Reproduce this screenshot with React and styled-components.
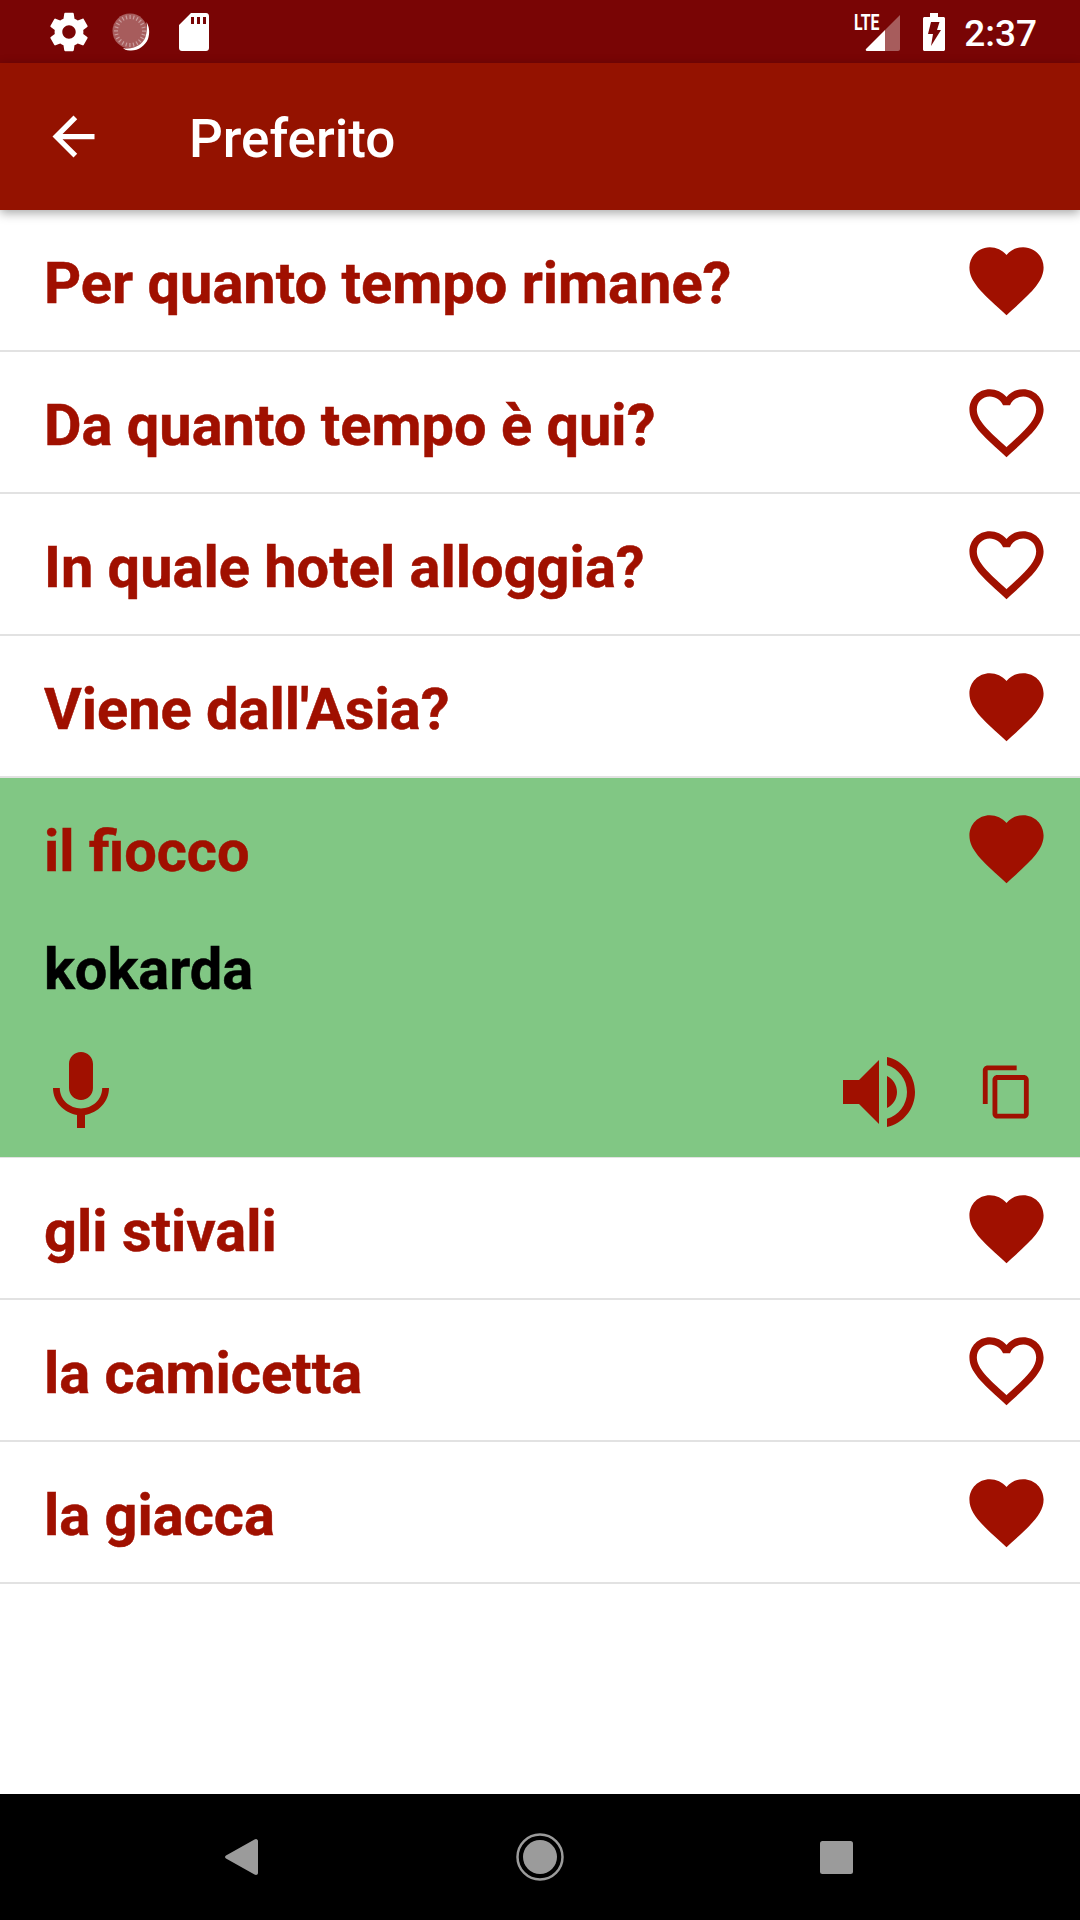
import React from "react";
import styled, { createGlobalStyle } from "styled-components";

const GlobalStyle = createGlobalStyle`
  html, body {
    margin: 0;
    padding: 0;
    background: #fff;
  }
  * {
    box-sizing: border-box;
  }
`;

const RED = "#a01000";

const Page = styled.div`
  width: 1080px;
  height: 1920px;
  display: flex;
  flex-direction: column;
  font-family: Roboto, "Liberation Sans", sans-serif;
  background: #fff;
  overflow: hidden;
`;

const StatusBar = styled.div`
  height: 63px;
  flex: none;
  background: #790505;
  display: flex;
  align-items: center;
  padding: 0 43px 0 46px;
  color: #fff;
`;

const StatusLeft = styled.div`
  display: flex;
  align-items: center;
  flex: 1;
`;

const DialWrap = styled.div`
  margin: 0 29px 0 20px;
  display: flex;
`;

const SignalBox = styled.div`
  position: relative;
  width: 47px;
  height: 38px;
  margin-right: 23px;
`;

const LteLabel = styled.span`
  position: absolute;
  left: 1px;
  top: 0;
  font-size: 22px;
  line-height: 20px;
  font-weight: 700;
  color: #fff;
  transform: scaleX(0.72);
  transform-origin: left top;
`;

const Clock = styled.span`
  font-size: 37px;
  font-weight: 500;
  line-height: 63px;
  margin-left: 19px;
  padding-top: 3px;
`;

const Toolbar = styled.header`
  height: 147px;
  flex: none;
  background: #941200;
  display: flex;
  align-items: center;
  color: #fff;
  padding-left: 42px;
  position: relative;
  z-index: 2;
  box-shadow: 0 3px 10px rgba(0, 0, 0, 0.35);
`;

const ToolbarTitle = styled.h1`
  margin: 0 0 0 84px;
  font-size: 53px;
  font-weight: 500;
  line-height: 60px;
  padding-top: 4px;
`;

const List = styled.main`
  flex: 1;
  display: flex;
  flex-direction: column;
`;

const Row = styled.div`
  height: 142px;
  flex: none;
  display: flex;
  align-items: center;
  justify-content: space-between;
  padding: 0 29px 0 44px;
  border-bottom: 2px solid ${(p) => (p.$open ? "transparent" : "#e2e2e2")};
`;

const OpenItem = styled.div`
  background: #81c784;
  display: flex;
  flex-direction: column;
  height: 380px;
  flex: none;
  border-bottom: 1px solid #e2e2e2;
`;

const Phrase = styled.span`
  font-size: 57.75px;
  font-weight: 700;
  color: ${RED};
  line-height: 70px;
  padding-top: 5px;
  -webkit-text-stroke: 0.5px ${RED};
`;

const Translation = styled.div`
  height: 106px;
  padding: 14px 44px 0;
  font-size: 57.75px;
  font-weight: 700;
  line-height: 70px;
  color: #000;
  -webkit-text-stroke: 0.5px #000;
`;

const Actions = styled.div`
  flex: 1;
  display: flex;
  align-items: center;
  padding: 0 44px 0 33px;
`;

const Spacer = styled.div`
  flex: 1;
`;

const CopyWrap = styled.div`
  margin-left: 51px;
  display: flex;
`;

const Icon = styled.svg`
  display: block;
  flex: none;
  fill: ${(p) => p.$color || RED};
`;

const SignalIcon = styled(Icon)`
  position: absolute;
  right: 0;
  bottom: 0;
`;

const NavBar = styled.nav`
  height: 126px;
  flex: none;
  background: #000;
  display: flex;
  align-items: center;
  justify-content: center;
`;

const NavSlot = styled.div`
  width: 296px;
  display: flex;
  justify-content: center;
`;

const BackSlot = styled(NavSlot)`
  padding-right: 6px;
`;

const HEART_FILLED =
  "M12 21.35l-1.45-1.32C5.4 15.36 2 12.28 2 8.5 2 5.42 4.42 3 7.5 3c1.74 0 3.41.81 4.5 2.09C13.09 3.81 14.76 3 16.5 3 19.58 3 22 5.42 22 8.5c0 3.78-3.4 6.86-8.55 11.54L12 21.35z";
const HEART_OUTLINE =
  "M16.5 3c-1.74 0-3.41.81-4.5 2.09C10.91 3.81 9.24 3 7.5 3 4.42 3 2 5.42 2 8.5c0 3.78 3.4 6.86 8.55 11.54L12 21.35l1.45-1.32C18.6 15.36 22 12.28 22 8.5 22 5.42 19.58 3 16.5 3zm-4.4 15.55l-.1.1-.1-.1C7.14 14.24 4 11.39 4 8.5 4 6.5 5.5 5 7.5 5c1.54 0 3.04.99 3.57 2.36h1.87C13.46 5.99 14.96 5 16.5 5c2 0 3.5 1.5 3.5 3.5 0 2.89-3.14 5.74-7.9 10.05z";

function Heart({ filled }) {
  return (
    <Icon width="89" height="89" viewBox="0 0 24 24">
      <path d={filled ? HEART_FILLED : HEART_OUTLINE} />
    </Icon>
  );
}

function Gear() {
  return (
    <Icon $color="#fff" width="46" height="46" viewBox="0 0 24 24">
      <path d="M19.43 12.98c.04-.32.07-.64.07-.98s-.03-.66-.07-.98l2.11-1.65c.19-.15.24-.42.12-.64l-2-3.46c-.12-.22-.39-.3-.61-.22l-2.49 1c-.52-.4-1.08-.73-1.69-.98l-.38-2.65C14.46 2.18 14.25 2 14 2h-4c-.25 0-.46.18-.49.42l-.38 2.65c-.61.25-1.17.59-1.69.98l-2.49-1c-.23-.09-.49 0-.61.22l-2 3.46c-.13.22-.07.49.12.64l2.11 1.65c-.04.32-.07.65-.07.98s.03.66.07.98l-2.11 1.65c-.19.15-.24.42-.12.64l2 3.46c.12.22.39.3.61.22l2.49-1c.52.4 1.08.73 1.69.98l.38 2.65c.03.24.24.42.49.42h4c.25 0 .46-.18.49-.42l.38-2.65c.61-.25 1.17-.59 1.69-.98l2.49 1c.23.09.49 0 .61-.22l2-3.46c.12-.22.07-.49-.12-.64l-2.11-1.65zM12 15.5c-1.93 0-3.5-1.57-3.5-3.5s1.57-3.5 3.5-3.5 3.5 1.57 3.5 3.5-1.57 3.5-3.5 3.5z" />
    </Icon>
  );
}

function Dial() {
  const ticks = Array.from({ length: 24 }, (_, i) => (i * 360) / 24);
  return (
    <Icon $color="#fff" width="38" height="38" viewBox="0 0 38 38">
      <circle cx="18" cy="18" r="17.5" opacity="0.35" />
      {ticks.map((deg) => (
        <rect
          key={deg}
          x="17.5"
          y="2"
          width="1.2"
          height="4"
          opacity="0.4"
          transform={`rotate(${deg} 18 18)`}
        />
      ))}
      <path d="M34.500 9C37.500 14 38 20 36 26C33 33 26 38 18 37.500C14 37.500 12 36 11 35C20 37 30 33 33.500 24C35 19 35.500 14 34.500 9z" />
    </Icon>
  );
}

function SdCard() {
  return (
    <Icon $color="#fff" width="30" height="38" viewBox="0 0 30 38">
      <path
        fillRule="evenodd"
        d="M12 0h15c1.700 0 3 1.300 3 3v32c0 1.700-1.300 3-3 3H3c-1.700 0-3-1.300-3-3V12L12 0zM12 4v7h3V4h-3zm6 0v7h3V4h-3zm6 0v7h3V4h-3z"
      />
    </Icon>
  );
}

function Signal() {
  return (
    <SignalIcon $color="#fff" width="35" height="36" viewBox="0 0 35 36">
      <path d="M20 15L1 34c-.6.700-.2 2 .8 2H20V15z" />
      <path opacity="0.35" d="M20 15L35 0v34c0 1-.8 2-2 2H20V15z" />
    </SignalIcon>
  );
}

function Battery() {
  return (
    <Icon $color="#fff" width="22" height="38" viewBox="0 0 22 38">
      <path
        fillRule="evenodd"
        d="M7 0h8v4h5.500c.8 0 1.500.700 1.500 1.500v31c0 .8-.7 1.500-1.500 1.500h-19C.7 38 0 37.300 0 36.500v-31C0 4.700.7 4 1.500 4H7V0zM8 9h8.500l-2.500 8h4L8 33l2-12H5L8 9z"
      />
    </Icon>
  );
}

function ArrowBack() {
  return (
    <Icon $color="#fff" width="63" height="63" viewBox="0 0 24 24">
      <path d="M20 11H7.830l5.590-5.590L12 4l-8 8 8 8 1.410-1.410L7.830 13H20v-2z" />
    </Icon>
  );
}

const phrasesTop = [
  { text: "Per quanto tempo rimane?", fav: true },
  { text: "Da quanto tempo è qui?", fav: false },
  { text: "In quale hotel alloggia?", fav: false },
  { text: "Viene dall'Asia?", fav: true },
];

const phrasesBottom = [
  { text: "gli stivali", fav: true },
  { text: "la camicetta", fav: false },
  { text: "la giacca", fav: true },
];

function PhraseRow({ text, fav }) {
  return (
    <Row>
      <Phrase>{text}</Phrase>
      <Heart filled={fav} />
    </Row>
  );
}

export default function App() {
  return (
    <Page>
      <GlobalStyle />
      <StatusBar>
        <StatusLeft>
          <Gear />
          <DialWrap>
            <Dial />
          </DialWrap>
          <SdCard />
        </StatusLeft>
        <SignalBox>
          <LteLabel>LTE</LteLabel>
          <Signal />
        </SignalBox>
        <Battery />
        <Clock>2:37</Clock>
      </StatusBar>
      <Toolbar>
        <ArrowBack />
        <ToolbarTitle>Preferito</ToolbarTitle>
      </Toolbar>
      <List>
        {phrasesTop.map((p) => (
          <PhraseRow key={p.text} text={p.text} fav={p.fav} />
        ))}
        <OpenItem>
          <Row $open>
            <Phrase>il fiocco</Phrase>
            <Heart filled />
          </Row>
          <Translation>kokarda</Translation>
          <Actions>
            <Icon width="96" height="96" viewBox="0 0 24 24">
              <path d="M12 14c1.660 0 2.990-1.340 2.990-3L15 5c0-1.660-1.340-3-3-3S9 3.340 9 5v6c0 1.660 1.340 3 3 3zm5.300-3c0 3-2.540 5.100-5.300 5.100S6.700 14 6.700 11H5c0 3.410 2.720 6.230 6 6.720V21h2v-3.280c3.280-.480 6-3.300 6-6.720h-1.700z" />
            </Icon>
            <Spacer />
            <Icon width="96" height="96" viewBox="0 0 24 24">
              <path d="M3 9v6h4l5 5V4L7 9H3zm13.500 3c0-1.770-1.020-3.290-2.500-4.030v8.050c1.480-.730 2.500-2.250 2.500-4.020zM14 3.230v2.060c2.890.860 5 3.540 5 6.710s-2.110 5.850-5 6.710v2.060c4.010-.910 7-4.490 7-8.770s-2.990-7.860-7-8.770z" />
            </Icon>
            <CopyWrap>
              <Icon width="58" height="58" viewBox="0 0 24 24">
                <path d="M16 1H4c-1.100 0-2 .900-2 2v14h2V3h12V1zm3 4H8c-1.100 0-2 .900-2 2v14c0 1.100.900 2 2 2h11c1.100 0 2-.900 2-2V7c0-1.100-.900-2-2-2zm0 16H8V7h11v14z" />
              </Icon>
            </CopyWrap>
          </Actions>
        </OpenItem>
        {phrasesBottom.map((p) => (
          <PhraseRow key={p.text} text={p.text} fav={p.fav} />
        ))}
      </List>
      <NavBar>
        <BackSlot>
          <Icon $color="#9b9b9b" width="33" height="36" viewBox="0 0 33 36">
            <path d="M31 0c1 0 2 1 2 2v32c0 1-1 2-2 2-.5 0-1-.2-1.500-.5L1 19.500c-1.300-.8-1.300-2.200 0-3L29.500.5C30 .2 30.500 0 31 0z" />
          </Icon>
        </BackSlot>
        <NavSlot>
          <Icon $color="#9b9b9b" width="48" height="48" viewBox="0 0 48 48">
            <circle cx="24" cy="24" r="17" />
            <circle cx="24" cy="24" r="22.500" fill="none" stroke="#9b9b9b" strokeWidth="2.500" />
          </Icon>
        </NavSlot>
        <NavSlot>
          <Icon $color="#9b9b9b" width="33" height="33" viewBox="0 0 33 33">
            <rect width="33" height="33" rx="2.500" />
          </Icon>
        </NavSlot>
      </NavBar>
    </Page>
  );
}
